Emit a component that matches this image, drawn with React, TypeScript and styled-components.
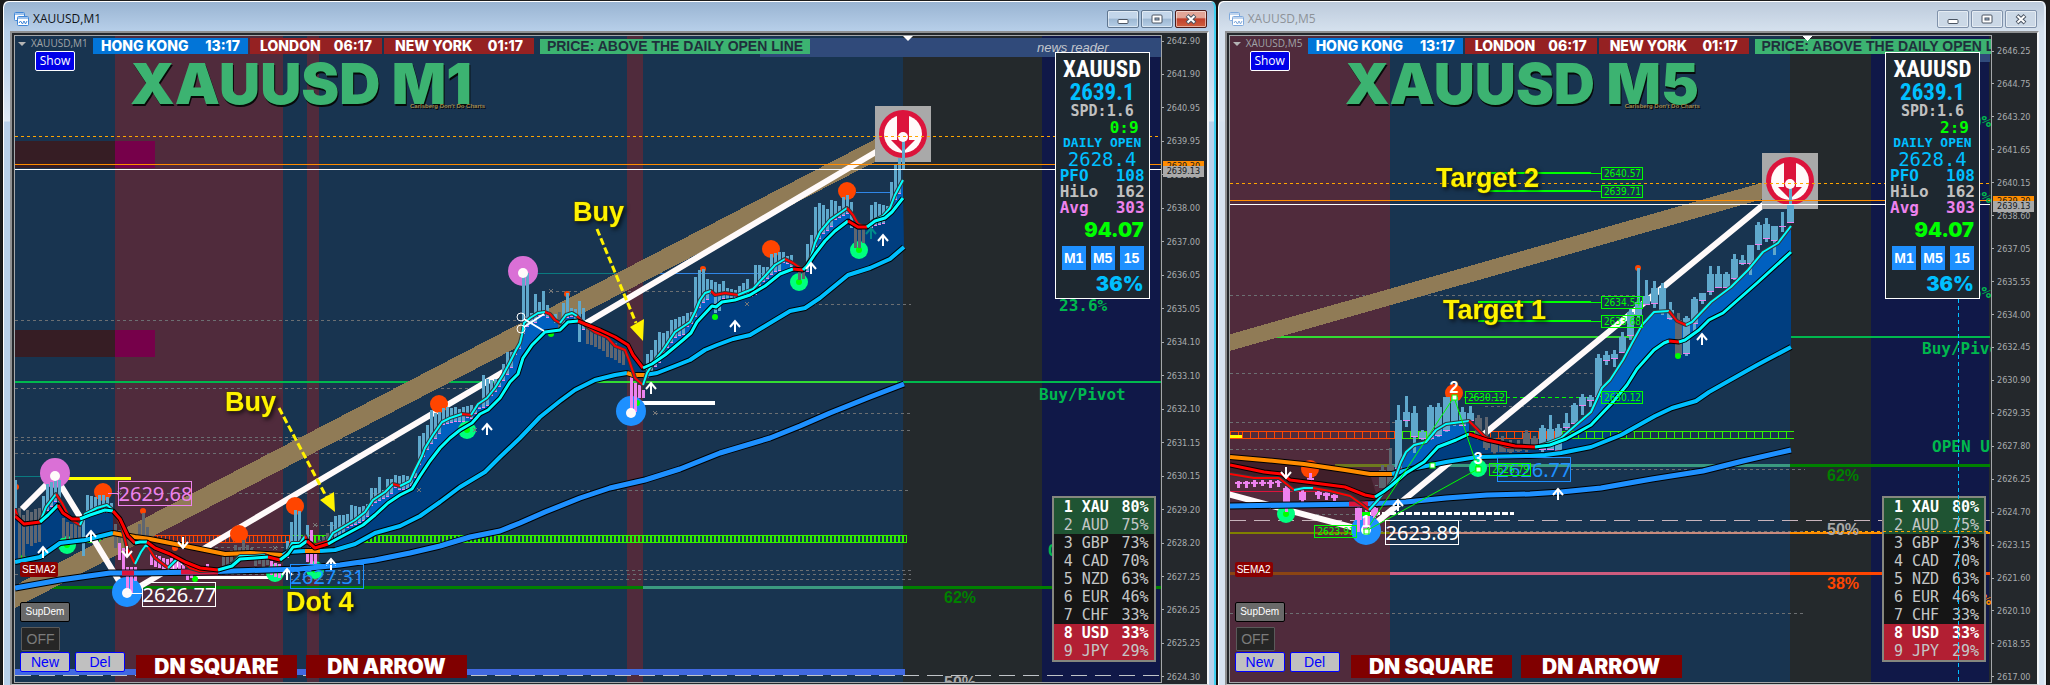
import React from "react";
import styled, { createGlobalStyle, css } from "styled-components";

const SANS = '"Liberation Sans", Arial, sans-serif';
const UI = '"Open Sans", "Noto Sans", sans-serif';
const BLACK = 'Inter, "Liberation Sans", sans-serif';
const MONO = '"DejaVu Sans Mono", "Liberation Mono", monospace';
const COND = 'Impact, "Liberation Sans Narrow", "Roboto Condensed", "DejaVu Sans Condensed", sans-serif';

const GlobalStyle = createGlobalStyle`
  *, *::before, *::after { box-sizing: border-box; }
  body { margin: 0; background: #1c1c1c; font-family: ${SANS}; }
  button { font: inherit; margin: 0; padding: 0; cursor: pointer; }
`;

/* ---------- window chrome ---------- */

const Desktop = styled.main`
  display: flex;
  min-height: 100vh;
  padding: 1px 3px 0 2px;
  overflow: hidden;
`;

const ChartWindow = styled.section<{ $grow: number; $active: boolean }>`
  flex: ${(p) => p.$grow} 1 0;
  min-width: 0;
  display: flex;
  flex-direction: column;
  border: solid #141414;
  border-width: 0 1px;
  border-radius: 6px 6px 0 0;
  box-shadow: inset 1px 1px 0 #fff, inset -2px 0 0 ${(p) => (p.$active ? "#3fd0f0" : "#e4edf6")};
  background: ${(p) =>
    p.$active
      ? "linear-gradient(#98b3d1 0, #b7cfe9 30px, #c3d8ee 70px, #e0eaf5 120px, #b9d1ea 121px)"
      : "linear-gradient(#bccadb 0, #d5e1ee 30px, #dbe6f2 120px, #d7e4f2 121px)"};
`;

const TitleBar = styled.header`
  display: flex;
  align-items: center;
  gap: 4px;
  height: 30px;
  padding: 6px 9px 0 11px;
`;

const WindowTitle = styled.h1<{ $active: boolean }>`
  flex: 1;
  margin: 0;
  font: 400 12px/16px ${UI};
  color: ${(p) => (p.$active ? "#101418" : "#8d9298")};
`;

const WindowButtons = styled.div`
  display: flex;
  gap: 2px;
`;

const WindowButton = styled.button<{ $kind: "active" | "idle" | "close" }>`
  display: flex;
  align-items: center;
  justify-content: center;
  width: 32px;
  height: 18px;
  border: 1px solid #5f7690;
  border-radius: 2px;
  box-shadow: inset 0 0 0 1px rgba(255, 255, 255, 0.5);
  background: linear-gradient(#c3d6ea 0 45%, #9db8d3 50%, #b6cee6);
  ${(p) => p.$kind === "idle" && css`border-color: #8092ab; background: #cbd8e6;`}
  ${(p) =>
    p.$kind === "close" &&
    css`
      border-color: #4c1a18;
      background: linear-gradient(#e2a597 0 40%, #c0402c 50%, #cf5f3f);
    `}
`;

const Frame = styled.div`
  flex: 1;
  display: flex;
  min-height: 0;
  margin: 0 7px 0 7px;
  padding: 2px 0 1px 2px;
  border: 2px solid #8e9092;
  border-right-color: #f4f6f8;
  border-bottom: 1px solid #c8c8c8;
  background: #24282c;
`;

const Plot = styled.div`
  position: relative;
  flex: 1;
  min-width: 0;
  border: 1px solid #a4a7aa;
  overflow: hidden;
  background: #24292c;
`;

const Canvas = styled.svg`
  position: absolute;
  inset: 0;
  width: 100%;
  height: 100%;
  pointer-events: none;
`;

/* ---------- price axis ---------- */

const Axis = styled.ol<{ $top: number }>`
  position: relative;
  display: flex;
  flex-direction: column;
  justify-content: space-between;
  width: 45px;
  margin: 0;
  padding: ${(p) => p.$top}px 0 0;
  list-style: none;
`;

const AxisLabel = styled.li`
  display: flex;
  align-items: center;
  gap: 3px;
  height: 12px;
  font: 400 9px/12px "DejaVu Sans Condensed", "DejaVu Sans", sans-serif;
  color: #a9acae;
  &::before {
    content: "";
    width: 2px;
    height: 1px;
    background: #a9acae;
  }
`;

const PriceTag = styled.li<{ $top: number; $bg: string }>`
  position: absolute;
  left: 1px;
  top: ${(p) => p.$top}px;
  width: 41px;
  height: 11px;
  padding-left: 4px;
  background: ${(p) => p.$bg};
  color: #14181c;
  font: 400 9px/11px "DejaVu Sans Condensed", "DejaVu Sans", sans-serif;
`;

/* ---------- controls over the chart ---------- */

const Overlay = styled.div`
  position: absolute;
  inset: 0;
  display: flex;
  flex-direction: column;
  align-items: flex-start;
`;

const HeaderRow = styled.div`
  display: flex;
  align-items: flex-start;
  gap: 2px;
  padding-top: 2px;
  white-space: nowrap;
`;

const SymbolLabel = styled.div`
  display: flex;
  align-items: center;
  gap: 5px;
  width: 76px;
  height: 11px;
  padding-left: 3px;
  font: 400 10px/11px ${UI};
  color: #a0a4a8;
  &::before {
    content: "";
    border: 4px solid transparent;
    border-top-color: #b4b4b4;
    border-bottom: 0;
  }
`;

const Session = styled.div<{ $width: number; $open?: boolean; $pad: number }>`
  display: flex;
  justify-content: space-between;
  width: ${(p) => p.$width}px;
  height: 16px;
  padding: 0 ${(p) => p.$pad}px;
  background: ${(p) => (p.$open ? "#0275d8" : "#952122")};
  color: #fff;
  font: 800 14px/16px ${BLACK};
`;

const PriceState = styled.div`
  width: 270px;
  height: 15px;
  margin: 1px 0 0 4px;
  background: #3cb371;
  color: #1f303c;
  font: 700 14px/15px ${SANS};
  text-align: center;
`;

const ShowButton = styled.button`
  width: 40px;
  height: 20px;
  margin-left: 20px;
  margin-top: -3px;
  border: 1px solid #fff;
  border-radius: 2px;
  background: #0000e8;
  color: #fff;
  font: 400 12px/16px ${UI};
  z-index: 1;
`;

const BigTitle = styled.h2`
  margin: -20px 0 0 115px;
  color: #3cb371;
  font: 900 57px/66px ${BLACK};
  text-shadow: 1px 2px 0 #060a08;
  white-space: nowrap;
`;

const Motto = styled.p`
  margin: -15px 0 0 395px;
  color: #a58a4e;
  font: 700 6px/8px ${SANS};
  text-shadow: 1px 1px 0 #000;
`;

const Footer = styled.div`
  display: flex;
  flex-direction: column;
  align-items: flex-start;
  margin-top: auto;
  padding: 0 0 5px 5px;
`;

const Chip = styled.span`
  height: 15px;
  margin-bottom: 25px;
  padding: 0 2px;
  border-radius: 2px;
  background: #8b0000;
  color: #fff;
  font: 400 10px/15px ${SANS};
`;

const SupDemButton = styled.button`
  width: 50px;
  height: 20px;
  border: 1px solid #000;
  border-radius: 2px;
  background: #696969;
  color: #fff;
  font: 400 10px/16px ${SANS};
`;

const OffButton = styled.button`
  width: 39px;
  height: 24px;
  margin: 5px 0 1px 1px;
  border: 1px solid #5a5a5a;
  border-radius: 1px;
  background: #262626;
  color: #7b7b7b;
  font: 400 14px/20px ${SANS};
`;

const FooterRow = styled.div`
  display: flex;
  align-items: flex-start;
  gap: 5px;
  height: 25px;
`;

const ObjectButton = styled.button`
  width: 50px;
  height: 20px;
  border: 1px solid #0000ff;
  border-radius: 2px;
  background: #c0c0c0;
  color: #0000ff;
  font: 400 14px/18px ${SANS};
`;

const SignalBadge = styled.div<{ $last?: boolean }>`
  width: 161px;
  height: 23px;
  margin: 3px 0 0 ${(p) => (p.$last ? 4 : 6)}px;
  background: #800000;
  color: #fff;
  font: 900 21px/23px ${BLACK};
  text-align: center;
  white-space: nowrap;
`;

/* ---------- quote panel ---------- */

const QuotePanel = styled.aside`
  position: absolute;
  top: 16px;
  right: 11px;
  width: 95px;
  height: 247px;
  padding: 5px 4px 0;
  border: 1px solid #fff;
  background: #1e2830;
`;

const Line = styled.div<{ $size: number; $h: number; $color: string; $align?: string; $font?: string; $weight?: number; $pad?: number }>`
  height: ${(p) => p.$h}px;
  padding: 0 ${(p) => p.$pad ?? 0}px;
  text-align: ${(p) => p.$align ?? "center"};
  color: ${(p) => p.$color};
  font: ${(p) => p.$weight ?? 400} ${(p) => p.$size}px/${(p) => p.$h}px ${(p) => p.$font ?? MONO};
  white-space: nowrap;
`;

const Pair = styled(Line)`
  display: flex;
  justify-content: space-between;
`;

const Frames = styled.div`
  display: flex;
  justify-content: space-between;
  padding: 2px 1px 3px 2px;
`;

const FrameButton = styled.button`
  width: 24px;
  height: 24px;
  border: 0;
  background: #1e90ff;
  color: #fff;
  font: 700 14px/24px ${SANS};
`;

/* ---------- strength table ---------- */

const Strength = styled.table`
  position: absolute;
  right: 5px;
  bottom: 20px;
  width: 104px;
  border: 2px solid #85877f;
  border-collapse: collapse;
  background: #151515;
  font: 400 15px/18px ${MONO};
`;

const StrengthRow = styled.tr<{ $tone: "up" | "flat" | "down"; $lead: boolean }>`
  height: 18px;
  background: ${(p) => ({ up: "#1f5433", flat: "#151515", down: "#b21f33" })[p.$tone]};
  color: ${(p) => (p.$lead ? "#fff" : "#c4c6c6")};
  font-weight: ${(p) => (p.$lead ? 700 : 400)};
  td {
    padding: 0;
  }
  td:first-child {
    width: 29px;
    padding-left: 10px;
  }
  td:last-child {
    padding-right: 5px;
    text-align: right;
  }
`;

/* ---------- chart drawing helpers ---------- */

type Pt = [number, number];
type Seg = { c: string; p: Pt[] };
type Bar = [number, number, number, string?];

const AQUA = "#00ffff";
const RED = "#ff0000";
const ORANGE = "#ff8c00";
const SKY = "#00bfff";
const BLUE = "#5fa8cc";
const GREY = "#5f6670";
const VIOLET = "#ee82ee";
const LIME = "#00ff00";

const toPoints = (p: Pt[]) => p.map((q) => q.join(",")).join(" ");

const joined = (s: Seg[]) => s.flatMap((x) => x.p);

const between = (top: Pt[], bottom: Pt[], from: number, to: number) => {
  const keep = (p: Pt[]) => p.filter(([x]) => x >= from && x <= to);
  return toPoints([...keep(top), ...keep(bottom).reverse()]);
};

const valueAt = (p: Pt[], x: number) => {
  const i = p.findIndex((q) => q[0] >= x);
  if (i <= 0) return p[i < 0 ? p.length - 1 : 0][1];
  const [a, b] = [p[i - 1], p[i]];
  return a[1] + ((b[1] - a[1]) * (x - a[0])) / (b[0] - a[0] || 1);
};

const Average = ({ segs, width, edge }: { segs: Seg[]; width: number; edge: string }) => (
  <g fill="none" strokeLinejoin="round">
    <polyline points={toPoints(joined(segs))} stroke={edge} strokeWidth={width + 2} />
    {segs.map((s, i) => {
      const prev = i > 0 ? segs[i - 1].p.slice(-1) : [];
      return <polyline key={i} points={toPoints([...prev, ...s.p])} stroke={s.c} strokeWidth={width} />;
    })}
  </g>
);

const H = ({ y, x1, x2, c, w = 1, dash }: { y: number; x1: number; x2: number; c: string; w?: number; dash?: string }) => (
  <line x1={x1} x2={x2} y1={y + (w % 2) / 2} y2={y + (w % 2) / 2} stroke={c} strokeWidth={w} strokeDasharray={dash} />
);

const Arrow = ({ x, y, down, c = "#fff" }: { x: number; y: number; down?: boolean; c?: string }) => (
  <path
    d={down ? `M${x} ${y}v10m-5 -5l5 6l5 -6` : `M${x} ${y + 12}v-11m-5 6l5 -6l5 6`}
    fill="none"
    stroke={c}
    strokeWidth="2"
  />
);

const Dot = ({ x, y, r, c, inner, ir = 3 }: { x: number; y: number; r: number; c: string; inner?: string; ir?: number }) => (
  <>
    <circle cx={x} cy={y} r={r} fill={c} />
    {inner && <circle cx={x} cy={y} r={ir} fill={inner} />}
  </>
);

const Boxed = ({ x, y, w, h, c, size, children }: { x: number; y: number; w: number; h: number; c: string; size: number; children: string }) => (
  <>
    <rect x={x + 0.5} y={y + 0.5} width={w} height={h} fill="none" stroke={c} />
    <text
      x={x + 1 + w / 2}
      y={y + h - (size > 15 ? 4 : 2)}
      fill={c}
      fontSize={size}
      fontFamily={size > 15 ? "Noto Sans, sans-serif" : "DejaVu Sans Condensed, sans-serif"}
      textAnchor="middle"
    >
      {children}
    </text>
  </>
);

const Note = ({ x, y, children }: { x: number; y: number; children: string }) => (
  <text
    x={x}
    y={y}
    fill="#fff200"
    stroke="#4a4600"
    strokeWidth="1"
    paintOrder="stroke"
    fontFamily={SANS}
    fontWeight="700"
    fontSize="27"
    style={{ filter: "drop-shadow(2px 2px 2px #000a)" }}
  >
    {children}
  </text>
);

const Level = ({ x, y, c, children, mono }: { x: number; y: number; c: string; children: string; mono?: boolean }) => (
  <text x={x} y={y} fill={c} fontFamily={mono ? MONO : SANS} fontWeight="700" fontSize="16">
    {children}
  </text>
);

const ExitSign = ({ x, y }: { x: number; y: number }) => (
  <g>
    <rect x={x - 28} y={y - 28} width="56" height="56" fill="#a9a9a9" />
    <circle cx={x} cy={y} r="24" fill="#dc143c" />
    <circle cx={x} cy={y} r="19" fill="#fffafa" />
    <path d={`M${x - 6} ${y - 21}h12v27h6l-12 12l-12 -12h6z`} fill="#dc143c" />
  </g>
);

const Ladder = ({ x1, x2, y, step, c, w }: { x1: number; x2: number; y: number; step: number; c: string; w: number }) => (
  <g>
    <line x1={x1} x2={x2} y1={y + 4} y2={y + 4} stroke={c} strokeWidth="7" strokeDasharray={`${w} ${step - w}`} />
    <H x1={x1} x2={x2} y={y} c={c} />
    <H x1={x1} x2={x2} y={y + 7} c={c} />
  </g>
);

/* ---------- M1 data ---------- */

const fast1: Seg[] = [
  { c: RED, p: [[15, 509], [18, 518], [24, 525], [40, 522]] },
  { c: AQUA, p: [[46, 507], [56, 494]] },
  { c: RED, p: [[62, 503], [70, 519], [80, 525]] },
  { c: AQUA, p: [[85, 514], [97, 508], [107, 505], [113, 510]] },
  { c: RED, p: [[122, 527], [127, 548], [135, 564]] },
  { c: AQUA, p: [[141, 552], [146, 545], [148, 547]] },
  { c: RED, p: [[155, 558], [168, 568]] },
  { c: AQUA, p: [[178, 558]] },
  { c: RED, p: [[190, 568], [200, 571], [220, 570]] },
  { c: AQUA, p: [[232, 564], [240, 556], [255, 556], [265, 555]] },
  { c: RED, p: [[280, 562]] },
  { c: AQUA, p: [[288, 552], [292, 543], [300, 543], [305, 536]] },
  { c: RED, p: [[308, 542], [315, 545], [328, 541]] },
  { c: AQUA, p: [[333, 533], [340, 529], [355, 520], [365, 512], [373, 500], [385, 492], [393, 484]] },
  { c: RED, p: [[400, 486]] },
  { c: AQUA, p: [[410, 481], [415, 470], [422, 456], [425, 448], [433, 435], [442, 422], [450, 418], [462, 414]] },
  { c: RED, p: [[471, 415]] },
  { c: AQUA, p: [[478, 404], [487, 398], [495, 388], [503, 375], [510, 362], [516, 350], [520, 343], [522, 335], [524, 323], [530, 318], [538, 313], [545, 312]] },
  { c: RED, p: [[550, 314], [555, 320], [560, 323]] },
  { c: AQUA, p: [[566, 315], [572, 313], [577, 316]] },
  { c: RED, p: [[585, 325], [595, 332], [607, 337], [615, 346], [625, 350], [629, 360], [635, 378], [643, 385]] },
  { c: AQUA, p: [[647, 373], [655, 360], [663, 350], [675, 332], [690, 322], [695, 312], [700, 300], [705, 293], [711, 291]] },
  { c: RED, p: [[715, 295], [725, 293], [738, 295]] },
  { c: AQUA, p: [[745, 292], [753, 289], [765, 276], [775, 265], [785, 259]] },
  { c: RED, p: [[793, 263], [803, 270]] },
  { c: AQUA, p: [[810, 260], [815, 243], [820, 232], [830, 220], [840, 213], [847, 208]] },
  { c: RED, p: [[853, 215], [858, 224], [865, 227]] },
  { c: AQUA, p: [[873, 221], [883, 216], [890, 208], [895, 195], [903, 180]] },
];

const mid1: Seg[] = [
  { c: RED, p: [[15, 516], [24, 524], [40, 522]] },
  { c: AQUA, p: [[48, 515], [58, 505]] },
  { c: RED, p: [[63, 513], [72, 519], [80, 519]] },
  { c: AQUA, p: [[90, 515], [105, 510], [113, 511]] },
  { c: RED, p: [[120, 519], [128, 536], [135, 543]] },
  { c: AQUA, p: [[140, 542], [147, 542]] },
  { c: RED, p: [[155, 548], [170, 554], [185, 562], [200, 568], [218, 570]] },
  { c: AQUA, p: [[232, 566], [240, 559], [255, 558], [268, 557]] },
  { c: RED, p: [[280, 560]] },
  { c: AQUA, p: [[288, 554], [293, 547], [300, 546], [307, 541]] },
  { c: RED, p: [[315, 548], [328, 544]] },
  { c: AQUA, p: [[335, 540], [350, 532], [363, 525], [375, 515], [388, 503], [400, 495], [412, 489], [420, 476], [430, 461], [440, 448], [450, 438], [460, 430], [472, 423], [480, 414], [488, 410], [500, 398], [510, 382], [518, 374], [523, 358], [532, 345], [545, 332], [560, 330], [568, 322], [578, 321]] },
  { c: RED, p: [[585, 324], [600, 330], [615, 337], [628, 345], [633, 355], [643, 368]] },
  { c: AQUA, p: [[652, 364], [665, 355], [683, 340], [691, 333], [697, 322], [712, 306], [716, 307], [722, 302], [735, 300], [750, 295], [765, 286], [780, 274], [793, 269]] },
  { c: RED, p: [[803, 270]] },
  { c: AQUA, p: [[807, 266], [815, 254], [825, 241], [835, 231], [848, 221]] },
  { c: RED, p: [[858, 227], [867, 227]] },
  { c: AQUA, p: [[875, 221], [885, 218], [892, 212], [903, 198]] },
];

const slow1: Seg[] = [
  { c: SKY, p: [[15, 562], [40, 557], [60, 543], [85, 540], [113, 533]] },
  { c: ORANGE, p: [[135, 537], [150, 539], [180, 545], [200, 549], [225, 554], [250, 553], [283, 555]] },
  { c: SKY, p: [[288, 552], [305, 551]] },
  { c: ORANGE, p: [[320, 551]] },
  { c: SKY, p: [[335, 550], [355, 544], [375, 533], [400, 526], [420, 516], [440, 502], [460, 487], [485, 472], [500, 457], [520, 438], [540, 417], [560, 401], [575, 390], [595, 380], [615, 375], [627, 373]] },
  { c: ORANGE, p: [[633, 375], [645, 375]] },
  { c: SKY, p: [[657, 373], [675, 366], [690, 360], [705, 350], [717, 345], [733, 339], [750, 335], [775, 320], [790, 311], [805, 308], [820, 298], [848, 275], [870, 268], [890, 259], [904, 247]] },
];

const base1: Pt[] = [[15, 588], [60, 580], [110, 573], [140, 573], [200, 572], [300, 569], [340, 565], [375, 560], [410, 553], [440, 546], [470, 537], [500, 531], [520, 523], [545, 512], [580, 498], [610, 488], [645, 480], [680, 469], [720, 453], [770, 438], [800, 426], [830, 413], [870, 397], [904, 384]];

const run = (x: number, tops: number[], c = BLUE, len = 0): Bar[] => tops.map((t, i) => [x + i * 4, t, len ? t + len : 0, c]);

const bars1: Bar[] = [
  [15, 480, 508], [19, 508, 560, GREY], [23, 515, 558, GREY], ...run(27, [510, 512, 509, 508], GREY, 34),
  ...run(43, [496, 484, 482, 480, 480]), ...run(63, [518, 522, 524, 524, 520], GREY, 20), [83, 520, 556],
  ...run(87, [495, 496, 497, 495, 495, 497, 503]), ...run(115, [524, 530], GREY, 24),
  [119, 543, 560, VIOLET], [123, 548, 575, VIOLET], [127, 567, 590, VIOLET], [131, 567, 593, VIOLET], [135, 567, 581, VIOLET],
  [139, 524, 541, GREY], [143, 513, 540, GREY], [147, 527, 545, GREY],
  ...run(151, [553, 555, 556, 558, 559, 558, 560, 562], VIOLET, 12), [183, 561, 571, VIOLET], [187, 569, 580, VIOLET], [191, 567, 578, VIOLET],
  [207, 564, 572, VIOLET], ...run(223, [555, 556, 550, 545, 547, 540, 545, 548, 554, 552, 557, 553], GREY, 12),
  ...run(271, [561, 563, 564], VIOLET, 14), ...run(287, [541, 522, 510, 511, 538, 525]),
  [307, 548, 562, VIOLET], [311, 530, 564, VIOLET], [315, 545, 564, VIOLET], ...run(319, [540, 537, 533], GREY, 12),
  ...run(331, [522, 516, 515, 515, 514, 505, 506, 507, 506, 504, 488, 488, 477, 490, 479, 479, 475, 476, 475, 476, 478, 473, 436, 433, 425, 410, 413, 412, 408, 407, 408, 407, 409, 407, 406, 405, 410, 407, 375, 379, 380, 379, 379, 364, 352, 352, 350, 345, 273, 273, 313, 294, 302, 291, 305]),
  [555, 314, 323], [559, 312, 330, GREY], ...run(563, [303, 293, 308, 309, 301, 308]),
  [579, 322, 342], ...run(587, [327, 328, 330, 332], GREY, 17), ...run(603, [334, 340, 341, 343, 346, 348], GREY, 17),
  [631, 377, 411, VIOLET], [635, 383, 412, VIOLET], [639, 385, 398, VIOLET], [643, 390, 398, VIOLET],
  ...run(647, [354, 350, 340, 332, 333, 331, 320, 319, 317, 316, 313, 312, 277, 270, 269, 279, 280]),
  [715, 282, 313], [719, 284, 311], ...run(723, [281, 288, 289, 290, 286, 283, 279, 292, 265, 265, 267, 267, 254, 253, 252, 252, 256, 255]),
  [799, 268, 280, GREY], [803, 270, 279, GREY], ...run(807, [244, 235, 207, 203, 205, 209, 200, 201, 206, 197, 195]),
  [851, 202, 228], [855, 226, 248, GREY], [859, 230, 248, GREY], [863, 229, 243, GREY],
  ...run(871, [205, 202, 204, 205, 206, 182, 165, 158]), [903, 139, 170],
];

const dashes1: Pt[][] = [
  [[15, 320], [522, 320]], [[15, 388], [478, 388]], [[15, 437], [395, 437]], [[15, 440], [395, 440]], [[15, 453], [395, 453]],
  [[550, 291], [694, 291]], [[747, 304], [911, 304]], [[655, 413], [911, 413]], [[475, 430], [911, 430]], [[419, 490], [911, 490]],
  [[119, 493], [400, 493]], [[315, 525], [380, 525]], [[185, 547], [285, 547]], [[15, 574], [911, 574]], [[290, 570], [911, 570]], [[290, 579], [911, 579]],
];

const crosses1: Pt[] = [[551, 291], [747, 304], [655, 413], [475, 430], [419, 490], [315, 525], [275, 548], [119, 493]];

const Cross = ({ x, y }: { x: number; y: number }) => (
  <path d={`M${x - 2} ${y - 2}l4 4m0 -4l-4 4`} stroke="#777" strokeWidth="1" />
);

const ChartM1 = () => {
  const a = joined(fast1);
  const b = joined(mid1);
  const c = joined(slow1);
  return (
    <Canvas aria-label="XAUUSD one minute chart" role="img">
      <g transform="translate(-15 -36)">
        <rect x="15" y="36" width="888" height="2000" fill="#183450" />
        <rect x="115" y="36" width="168" height="2000" fill="#502b3c" />
        <rect x="307" y="36" width="12" height="2000" fill="#502b3c" />
        <rect x="627" y="36" width="16" height="2000" fill="#502b3c" />
        <rect x="1042" y="36" width="118" height="2000" fill="#101848" />
        <rect x="760" y="38" width="401" height="19" fill="#304a7a" />
        {[141, 330].map((y) => (
          <g key={y}>
            <rect x="15" y={y} width="100" height="27" fill="#361d24" />
            <rect x="115" y={y} width="40" height="27" fill="#76004a" />
          </g>
        ))}
        <g shapeRendering="crispEdges">
          {dashes1.map(([p, q], i) => (
            <H key={i} x1={p[0]} x2={q[0]} y={p[1]} c="#6c6f72" dash="3 3" />
          ))}
          <H x1={15} x2={1161} y={382} w={2} c="#00b84e" />
          <H x1={595} x2={897} y={382} w={2} c="#32dc32" />
          <H x1={15} x2={1161} y={587} w={3} c="#008000" />
          <H x1={643} x2={903} y={587} w={3} c="#3a9a80" />
          <H x1={15} x2={57} y={476} c="#0a7a80" />
          <H x1={536} x2={660} y={273} c="#0a7a80" />
          <H x1={656} x2={762} y={273} c="#2f86e8" />
          <H x1={856} x2={891} y={192} c="#2f86e8" />
          <Ladder x1={15} x2={133} y={535} step={4} c="#32dc20" w={2} />
          <Ladder x1={133} x2={290} y={535} step={4} c="#ff4500" w={1} />
          <Ladder x1={290} x2={907} y={535} step={4} c="#32f000" w={2} />
          <H x1={15} x2={905} y={672} w={6} c="#4169e1" />
          <H x1={15} x2={1161} y={675} c="#c0c4c8" dash="16 8" />
        </g>
        <line x1="-5" y1="607" x2="903" y2="136" stroke="#907b56" strokeWidth="20" shapeRendering="crispEdges" />
        <polyline points="22,509 55,476 127,594 903,136" fill="none" stroke="#fffafa" strokeWidth="6" />
        <H x1={55} x2={131} y={478} w={3} c="#ffff00" />
        <H x1={196} x2={281} y={577} w={3} c="#fff" />
        <H x1={637} x2={715} y={403} w={4} c="#fff" />

        <polygon points={between(b, c, 15, 113)} fill="#003e80" />
        <polygon points={between(b, c, 113, 288)} fill="#401f2a" />
        <polygon points={between(a, c, 113, 288)} fill="#5a2530" fillOpacity="0.4" />
        <polygon points={between(b, c, 330, 645)} fill="#003e80" />
        <polygon points={between(b, c, 651, 904)} fill="#003e80" />
        <polygon points={between(a, b, 46, 60)} fill="#0060c0" />
        <polygon points={between(a, b, 330, 578)} fill="#0060c0" />
        <polygon points={between(a, b, 652, 904)} fill="#0060c0" />

        <Dot x={55} y={473} r={15} c="#da70d6" />
        <Dot x={523} y={271} r={15} c="#da70d6" />
        <Dot x={127} y={592} r={15} c="#1e90ff" />
        <Dot x={631} y={411} r={15} c="#1e90ff" />
        {[[103, 492], [239, 534], [295, 506], [439, 404], [847, 191], [771, 249]].map(([x, y]) => (
          <Dot key={x} x={x} y={y} r={9} c="#ff4500" />
        ))}
        {[[143, 511], [703, 269], [567, 294], [16, 487], [175, 548]].map(([x, y]) => (
          <Dot key={x} x={x} y={y} r={3} c="#ff4500" />
        ))}
        {[[67, 545], [275, 573], [315, 570], [467, 430], [799, 282], [859, 250]].map(([x, y]) => (
          <Dot key={x} x={x} y={y} r={9} c="#00ff7f" inner={LIME} />
        ))}
        {[[715, 317], [551, 334], [23, 558], [195, 579], [637, 403]].map(([x, y]) => (
          <Dot key={x} x={x} y={y} r={3} c={LIME} />
        ))}

        <ExitSign x={903} y={134} />
        <g shapeRendering="crispEdges">
          {bars1.map(([x, t, bt, col = BLUE], i) => {
            const end = bt || valueAt(a, x) + 2 + ((i * 7) % 6);
            return (
              <g key={i}>
                <rect x={x - 1} y={t} width="3" height={Math.max(2, end - t)} fill={col} />
                {col === BLUE && !bt && <rect x={x - 1} y={end} width="3" height="1" fill={VIOLET} />}
              </g>
            );
          })}
        </g>

        <Average segs={[{ c: "#1e90ff", p: base1 }]} width={5} edge="#000" />
        <path d="M122 573h12M181 572h37" stroke="#dc143c" strokeWidth="5" />
        <Average segs={slow1} width={4} edge="#000" />
        <Average segs={fast1} width={2} edge="#33383c" />
        <Average segs={mid1} width={3} edge="#000" />

        {[[55, 476], [523, 273], [127, 593], [631, 413], [903, 137]].map(([x, y]) => (
          <Dot key={x} x={x} y={y} r={5} c="#fffafa" />
        ))}
        {crosses1.map(([x, y]) => (
          <Cross key={x} x={x} y={y} />
        ))}

        <g shapeRendering="crispEdges">
          <H x1={15} x2={1161} y={136} c="#ffa500" dash="3 3" />
          <H x1={15} x2={1161} y={164} c="#ff8c00" />
          <H x1={15} x2={1161} y={169} c="#fff" />
          <H x1={108} x2={119} y={493} c={VIOLET} />
          <H x1={127} x2={142} y={593} c="#fff" />
        </g>
        <Arrow x={871} y={227} c="#008b8b" />
        {[[43, 546], [91, 530], [287, 568], [331, 558], [487, 423], [735, 320], [811, 262], [883, 234], [651, 382]].map(([x, y]) => (
          <Arrow key={x} x={x} y={y} />
        ))}
        <Arrow x={127} y={546} down />
        <Arrow x={183} y={537} down />
        <g fill="none" stroke="#fff" strokeWidth="1">
          <circle cx="521" cy="317" r="4" />
          <circle cx="521" cy="329" r="4" />
          <path d="M524 319l20 12M524 327l20 -13" strokeWidth="2" />
        </g>
        <Boxed x={118} y={481} w={73} h={24} c={VIOLET} size={20}>2629.68</Boxed>
        <Boxed x={142} y={582} w={73} h={24} c="#fff" size={20}>2626.77</Boxed>
        <Boxed x={290} y={564} w={73} h={24} c="#1e90ff" size={20}>2627.31</Boxed>

        <Note x={573} y={221}>Buy</Note>
        <Note x={225} y={411}>Buy</Note>
        <Note x={286} y={611}>Dot 4</Note>
        <g stroke="#fff200" strokeWidth="3" strokeDasharray="7 3">
          <path d="M597 229L636 323M279 408L327 498" />
        </g>
        <path d="M630 327L644 319L643 341ZM320 500L334 492L335 512Z" fill="#fff200" />

        <Level x={944} y={603} c="#008000">62%</Level>
        <Level x={944} y={688} c="#a8a8a8">50%</Level>
        <Level x={1059} y={311} c="#00b84e" mono>23.6%</Level>
        <Level x={1039} y={400} c="#00b84e" mono>Buy/Pivot</Level>
        <Level x={1048} y={556} c="#00b84e" mono>OPEN UP</Level>
        <text x="1037" y="52" fill="#c2c6cc" fontFamily={SANS} fontStyle="italic" fontSize="13">news reader</text>
        <path d="M903 36h10l-5 5z" fill="#fff" />
      </g>
    </Canvas>
  );
};

/* ---------- M5 data ---------- */

const fast5: Seg[] = [
  { c: RED, p: [[1230, 474], [1254, 478], [1279, 478], [1294, 490]] },
  { c: AQUA, p: [[1304, 488], [1313, 488]] },
  { c: RED, p: [[1330, 491], [1350, 496], [1360, 503], [1369, 510]] },
  { c: AQUA, p: [[1378, 500], [1395, 478], [1401, 462], [1406, 452], [1414, 445], [1426, 442], [1436, 430], [1446, 424], [1469, 421]] },
  { c: RED, p: [[1475, 427], [1485, 437], [1507, 447], [1534, 448]] },
  { c: AQUA, p: [[1548, 443], [1561, 438], [1576, 425], [1591, 412], [1602, 388], [1610, 380], [1623, 360], [1632, 343], [1642, 325], [1654, 312], [1669, 311]] },
  { c: RED, p: [[1677, 321], [1686, 325]] },
  { c: AQUA, p: [[1692, 322], [1711, 302], [1731, 287], [1748, 270], [1763, 252], [1778, 243], [1791, 226]] },
];

const mid5: Seg[] = [
  { c: RED, p: [[1230, 465], [1264, 472], [1282, 474], [1290, 480], [1314, 483], [1345, 487], [1365, 495], [1375, 497]] },
  { c: AQUA, p: [[1383, 492], [1391, 486], [1406, 473], [1424, 462], [1438, 447], [1456, 440], [1469, 434]] },
  { c: RED, p: [[1487, 440], [1515, 446], [1535, 447]] },
  { c: AQUA, p: [[1550, 445], [1566, 439], [1591, 425], [1612, 403], [1627, 385], [1637, 369], [1654, 350], [1664, 343], [1669, 341]] },
  { c: RED, p: [[1679, 342]] },
  { c: AQUA, p: [[1685, 340], [1699, 330], [1709, 320], [1723, 313], [1757, 283], [1791, 252]] },
];

const slow5: Seg[] = [
  { c: ORANGE, p: [[1230, 457], [1264, 460], [1304, 464], [1345, 470], [1370, 474], [1392, 474]] },
  { c: SKY, p: [[1396, 473], [1416, 468], [1446, 462], [1477, 457], [1530, 456], [1545, 455], [1561, 453], [1591, 447], [1621, 435], [1655, 416], [1672, 408], [1696, 401], [1709, 392], [1757, 365], [1791, 347]] },
];

const base5: Pt[] = [[1230, 506], [1294, 505], [1365, 504], [1406, 502], [1446, 498], [1487, 495], [1530, 494], [1561, 492], [1601, 488], [1652, 479], [1703, 471], [1743, 461], [1791, 450]];

/* high, body top, body bottom, low; newest candle first, eight pixels apart */
const candles5: [number, number, number, number][] = [
  [188, 204, 222, 222], [212, 226, 226, 232], [226, 226, 240, 255], [218, 224, 238, 242], [222, 225, 244, 250], [245, 245, 263, 275],
  [255, 260, 263, 265], [254, 259, 278, 280], [272, 274, 287, 288], [266, 274, 287, 287], [266, 274, 291, 295], [293, 293, 300, 304],
  [297, 299, 323, 333], [316, 318, 353, 356], [313, 320, 355, 358], [302, 310, 318, 320], [283, 288, 312, 315], [281, 288, 303, 308],
  [280, 296, 304, 304], [268, 302, 315, 318], [308, 312, 335, 340], [332, 337, 352, 352], [350, 354, 358, 367], [351, 355, 360, 365],
  [354, 358, 396, 396], [395, 397, 400, 407], [394, 397, 405, 415], [403, 405, 423, 423], [413, 423, 427, 430], [424, 428, 450, 450],
  [415, 429, 449, 449], [425, 428, 449, 452], [436, 438, 447, 449], [430, 433, 445, 447],
];

const early5: [number, number, number, number, number, string][] = [
  [1382, 465, 470, 488, 488, GREY], [1390, 448, 465, 485, 485, GREY], [1398, 405, 420, 468, 468, BLUE], [1406, 396, 412, 420, 427, BLUE],
  [1414, 406, 413, 436, 453, BLUE], [1422, 430, 432, 438, 440, BLUE], [1430, 405, 407, 438, 440, BLUE], [1438, 403, 407, 435, 437, BLUE],
  [1446, 397, 397, 430, 432, BLUE], [1454, 395, 397, 422, 426, BLUE], [1462, 407, 412, 425, 425, BLUE], [1470, 406, 413, 420, 422, BLUE],
  [1478, 415, 418, 438, 440, GREY], [1486, 417, 437, 448, 450, GREY], [1494, 438, 441, 452, 454, GREY], [1502, 436, 444, 452, 452, GREY],
  [1510, 440, 446, 452, 453, GREY], [1518, 440, 446, 451, 452, GREY], [1526, 433, 446, 450, 452, GREY],
  [1238, 481, 482, 484, 488, VIOLET], [1246, 481, 482, 484, 488, VIOLET], [1254, 480, 482, 484, 487, VIOLET], [1262, 480, 482, 484, 486, VIOLET],
  [1270, 480, 482, 484, 488, VIOLET], [1278, 480, 481, 483, 487, VIOLET], [1286, 486, 488, 502, 512, VIOLET], [1302, 490, 492, 500, 502, VIOLET],
  [1310, 473, 478, 480, 482, VIOLET], [1318, 491, 492, 495, 499, VIOLET], [1326, 492, 493, 496, 500, VIOLET], [1334, 494, 495, 498, 502, VIOLET],
  [1358, 504, 508, 520, 532, VIOLET], [1366, 510, 512, 530, 530, VIOLET], [1374, 504, 508, 516, 518, VIOLET],
];

const Candle = ({ x, v, c }: { x: number; v: number[]; c: string }) => (
  <g>
    <rect x={x - 1} y={v[0]} width="3" height={v[3] - v[0]} fill={c} />
    <rect x={x - 3} y={v[1]} width="7" height={Math.max(1, v[2] - v[1])} fill={c} />
    {c === BLUE && <rect x={x - 3} y={v[2]} width="7" height="1" fill={VIOLET} />}
  </g>
);

const dashes5: Pt[][] = [
  [[1230, 295], [1638, 295]], [[1230, 373], [1598, 373]], [[1230, 422], [1400, 422]], [[1230, 449], [1390, 449]], [[1485, 406], [1575, 406]],
  [[1357, 485], [1386, 485]], [[1310, 514], [1358, 514]], [[1230, 613], [1803, 613]], [[1570, 469], [1805, 469]], [[1380, 531], [1805, 531]],
];

const ChartM5 = () => {
  const a = joined(fast5);
  const b = joined(mid5);
  const c = joined(slow5);
  return (
    <Canvas aria-label="XAUUSD five minute chart" role="img">
      <g transform="translate(-1230 -36)">
        <rect x="1230" y="36" width="160" height="2000" fill="#502b3c" />
        <rect x="1390" y="36" width="400" height="2000" fill="#183450" />
        <rect x="1871" y="36" width="118" height="2000" fill="#101848" />
        <rect x="1979" y="54" width="11" height="8" fill="#304a7a" />
        <g shapeRendering="crispEdges">
          {dashes5.map(([p, q], i) => (
            <H key={i} x1={p[0]} x2={q[0]} y={p[1]} c="#6c6f72" dash="3 3" />
          ))}
          <H x1={1277} x2={1794} y={337} w={2} c="#32dc32" />
          <H x1={1790} x2={1990} y={337} w={2} c="#00b84e" />
          <H x1={1335} x2={1390} y={465} w={3} c="#6e7a1e" />
          <H x1={1390} x2={1790} y={465} w={3} c="#3a9a80" />
          <H x1={1790} x2={1990} y={465} w={3} c="#008000" />
          <H x1={1230} x2={1390} y={533} w={2} c="#808000" />
          <H x1={1390} x2={1790} y={533} w={2} c="#c88a7c" />
          <H x1={1790} x2={1990} y={533} w={2} c="#ff8c00" />
          <H x1={1230} x2={1390} y={573} w={3} c="#8b4513" />
          <H x1={1390} x2={1790} y={573} w={3} c="#cd5c7e" />
          <H x1={1790} x2={1990} y={573} w={3} c="#ff4500" />
          <H x1={1230} x2={1990} y={520} c="#c8b4bc" dash="16 8" />
          <H x1={1230} x2={1345} y={491} c="#dc143c" />
          <Ladder x1={1242} x2={1402} y={431} step={8} c="#ff4500" w={1} />
          <Ladder x1={1402} x2={1482} y={431} step={8} c="#32f000" w={1} />
          <Ladder x1={1482} x2={1562} y={431} step={8} c="#ff4500" w={1} />
          <Ladder x1={1230} x2={1242} y={431} step={8} c="#ff4500" w={1} />
          <H x1={1230} x2={1242} y={436} w={3} c="#ffff00" />
          {[173, 191, 302, 321].map((y) => (
            <g key={y}>
              <H x1={1478} x2={1591} y={y} w={2} c={LIME} />
              <H x1={1591} x2={1601} y={y} c={LIME} />
            </g>
          ))}
          <H x1={1457} x2={1601} y={397} c={LIME} dash="4 3" />
        </g>
        <line x1="1190" y1="354" x2="1790" y2="183" stroke="#907b56" strokeWidth="16" shapeRendering="crispEdges" />
        <polyline points="1220,492 1366,531 1790,183" fill="none" stroke="#fffafa" strokeWidth="6" />
        <H x1={1366} x2={1514} y={513} w={3} c="#fff" dash="6 2" />

        <polygon points={between(c, a, 1230, 1388)} fill="#401f2a" />
        <polygon points={between(b, c, 1391, 1791)} fill="#003e80" />
        <polygon points={between(a, b, 1391, 1470)} fill="#0060c0" />
        <polygon points={between(a, b, 1540, 1791)} fill="#0060c0" />
        <g shapeRendering="crispEdges">
          <Ladder x1={1562} x2={1794} y={431} step={8} c="#32f000" w={1} />
        </g>

        <Dot x={1310} y={469} r={9} c="#ff4500" />
        <Dot x={1454} y={393} r={9} c="#ff4500" />
        <Dot x={1638} y={268} r={3} c="#ff4500" />
        <Dot x={1286} y={514} r={9} c="#00ff7f" inner={LIME} />
        <Dot x={1366} y={530} r={15} c="#1e90ff" inner="#fff" ir={5} />

        <ExitSign x={1790} y={181} />
        <g shapeRendering="crispEdges">
          {candles5.map((v, i) => (
            <Candle key={i} x={1790 - i * 8} v={v} c={i === 14 || i > 31 ? GREY : BLUE} />
          ))}
          {early5.map(([x, ...rest], i) => (
            <Candle key={i} x={x} v={rest.slice(0, 4) as number[]} c={rest[4] as string} />
          ))}
        </g>
        <Dot x={1790} y={184} r={5} c="#fffafa" />
        <Dot x={1678} y={356} r={3} c={LIME} />

        <Average segs={[{ c: "#1e90ff", p: base5 }]} width={5} edge="#000" />
        <path d="M1349 504h19" stroke="#dc143c" strokeWidth="5" />
        <Average segs={slow5} width={4} edge="#000" />
        <Average segs={fast5} width={2} edge="#33383c" />
        <Average segs={mid5} width={3} edge="#000" />
        <Dot x={1478} y={468} r={9} c="#00ff7f" inner={LIME} />
        <rect x="1362" y="512" width="8" height="4" fill={LIME} />

        <Boxed x={1497} y={457} w={73} h={24} c="#1e90ff" size={20}>2626.77</Boxed>
        <g fill="none" stroke={LIME} strokeWidth="1">
          <path d="M1366 531L1454 397L1478 469Z" />
        </g>
        {[[1366, 531], [1454, 397], [1478, 469], [1432, 465]].map(([x, y]) => (
          <rect key={x} x={x - 2} y={y - 2} width="5" height="5" fill="#fff" stroke={LIME} />
        ))}
        <g shapeRendering="crispEdges">
          <H x1={1230} x2={1990} y={183} c="#ffa500" dash="3 3" />
          <H x1={1230} x2={1990} y={200} c="#ff8c00" />
          <H x1={1230} x2={1990} y={204} c="#fff" />
        </g>
        {[[1398, 499], [1558, 488], [1702, 333]].map(([x, y]) => (
          <Arrow key={x} x={x} y={y} />
        ))}
        <Arrow x={1286} y={467} down />

        <g fill="#fff" fontFamily={SANS} fontWeight="700" fontSize="16" textAnchor="middle">
          <text x="1366" y="527">1</text>
          <text x="1454" y="393">2</text>
          <text x="1478" y="464">3</text>
        </g>
        <Boxed x={1465} y={391} w={41} h={12} c={LIME} size={10}>2630.12</Boxed>
        <Boxed x={1489} y={463} w={41} h={12} c={LIME} size={10}>2626.79</Boxed>
        <Boxed x={1314} y={525} w={42} h={12} c={LIME} size={10}>2623.91</Boxed>
        <Boxed x={1601} y={167} w={41} h={12} c={LIME} size={10}>2640.57</Boxed>
        <Boxed x={1601} y={185} w={41} h={12} c={LIME} size={10}>2639.71</Boxed>
        <Boxed x={1601} y={296} w={41} h={12} c={LIME} size={10}>2634.54</Boxed>
        <Boxed x={1601} y={315} w={41} h={12} c={LIME} size={10}>2633.68</Boxed>
        <Boxed x={1601} y={391} w={41} h={12} c={LIME} size={10}>2630.12</Boxed>
        <Boxed x={1385} y={520} w={73} h={24} c="#fff" size={20}>2623.89</Boxed>

        <Note x={1436} y={187}>Target 2</Note>
        <Note x={1443} y={319}>Target 1</Note>

        <Level x={1827} y={481} c="#008000">62%</Level>
        <Level x={1827} y={535} c="#a8a8a8">50%</Level>
        <Level x={1827} y={589} c="#ff4500">38%</Level>
        <Level x={1943} y={127} c="#00b84e" mono>50.0%</Level>
        <Level x={1943} y={203} c="#00b84e" mono>38.2%</Level>
        <Level x={1943} y={298} c="#00b84e" mono>23.6%</Level>
        <Level x={1922} y={354} c="#00b84e" mono>Buy/Pivot</Level>
        <Level x={1932} y={452} c="#00b84e" mono>OPEN UP</Level>
        <Level x={1943} y={605} c="#ff8c00" mono>61.8%</Level>
      </g>
    </Canvas>
  );
};

const GuidesM5 = () => (
  <Canvas aria-hidden="true">
    <g transform="translate(-1230 -36)" shapeRendering="crispEdges">
      <line x1="1958.5" x2="1958.5" y1="299" y2="2000" stroke={SKY} strokeDasharray="4 3" />
      <H x1={1805} x2={1990} y={531} c="#ffa500" dash="3 3" />
      <path d="M1802 36h10l-5 5z" fill="#fff" />
    </g>
  </Canvas>
);

/* ---------- composed parts ---------- */

const ChartIcon = ({ dim }: { dim?: boolean }) => (
  <svg width="15" height="15" viewBox="0 0 15 15" fill="#fff" stroke={dim ? "#7fa9dc" : "#3f86d8"} aria-hidden="true">
    <rect x="0.5" y="0.5" width="10" height="8" rx="1" />
    <path d="M1 2h9" />
    <rect x="3.5" y="4.500" width="11" height="9" rx="1" />
    <path d="M4 6h10M5 11l1.500 -2l2 3l1.500 -3l1.500 3l1.500 -3" fill="none" />
  </svg>
);

const ChromeButtons = ({ active }: { active: boolean }) => (
  <WindowButtons>
    <WindowButton $kind={active ? "active" : "idle"} aria-label="Minimize">
      <svg width="12" height="12" viewBox="0 0 12 12">
        <rect x="1" y="6.500" width="10" height="4" rx="1" fill="#fff" stroke="#4b5563" />
      </svg>
    </WindowButton>
    <WindowButton $kind={active ? "active" : "idle"} aria-label="Restore">
      <svg width="12" height="12" viewBox="0 0 12 12">
        <rect x="1" y="2" width="10" height="8" rx="1" fill="#fff" stroke="#4b5563" />
        <rect x="4" y="5" width="4" height="2" fill="#9db8d3" stroke="#4b5563" />
      </svg>
    </WindowButton>
    <WindowButton $kind={active ? "close" : "idle"} aria-label="Close">
      <svg width="12" height="12" viewBox="0 0 12 12">
        <path d="M2 2.500L10 10M10 2.500L2 10" stroke="#4b5563" strokeWidth="4" />
        <path d="M2.500 3L9.500 9.500M9.500 3L2.500 9.500" stroke="#fff" strokeWidth="2" />
      </svg>
    </WindowButton>
  </WindowButtons>
);

const Quote = ({ timer }: { timer: string }) => (
  <QuotePanel>
    <Line $size={23} $h={24} $color="#fff" $font={COND} $weight={700}>XAUUSD</Line>
    <Line $size={23} $h={22} $color={SKY} $font={COND} $weight={700}>2639.1</Line>
    <Line $size={15} $h={15} $color="#c0c0c0" $weight={700}>SPD:1.6</Line>
    <Line $size={16} $h={17} $color={LIME} $weight={700} $align="right" $pad={6}>{timer}</Line>
    <Line $size={13} $h={14} $color={SKY} $weight={700}>DAILY OPEN</Line>
    <Line $size={19} $h={18} $color={SKY}>2628.4</Line>
    <Pair $size={16} $h={16} $color={SKY} $weight={700}><span>PFO</span><span>108</span></Pair>
    <Pair $size={16} $h={16} $color="#c0c0c0" $weight={700}><span>HiLo</span><span>162</span></Pair>
    <Pair $size={16} $h={16} $color={VIOLET} $weight={700}><span>Avg</span><span>303</span></Pair>
    <Line $size={20} $h={28} $color={LIME} $font={BLACK} $weight={900} $align="right" $pad={1}>94.07</Line>
    <Frames>
      {["M1", "M5", "15"].map((f) => (
        <FrameButton key={f}>{f}</FrameButton>
      ))}
    </Frames>
    <Line $size={20} $h={22} $color={SKY} $font={BLACK} $weight={900} $align="right" $pad={1}>36%</Line>
  </QuotePanel>
);

const strengths: [string, number][] = [
  ["XAU", 80], ["AUD", 75], ["GBP", 73], ["CAD", 70], ["NZD", 63], ["EUR", 46], ["CHF", 33], ["USD", 33], ["JPY", 29],
];

const StrengthTable = () => (
  <Strength>
    <tbody>
      {strengths.map(([name, pct], i) => (
        <StrengthRow key={name} $tone={i < 2 ? "up" : i > 6 ? "down" : "flat"} $lead={i === 0 || i === 7}>
          <td>{i + 1}</td>
          <td>{name}</td>
          <td>{pct}%</td>
        </StrengthRow>
      ))}
    </tbody>
  </Strength>
);

const Controls = ({ frame }: { frame: string }) => (
  <Overlay>
    <HeaderRow>
      <SymbolLabel>XAUUSD,{frame}</SymbolLabel>
      <Session $width={155} $pad={8} $open><span>HONG KONG</span><span>13:17</span></Session>
      <Session $width={132} $pad={10}><span>LONDON</span><span>06:17</span></Session>
      <Session $width={150} $pad={11}><span>NEW YORK</span><span>01:17</span></Session>
      <PriceState>PRICE: ABOVE THE DAILY OPEN LINE</PriceState>
    </HeaderRow>
    <ShowButton>Show</ShowButton>
    <BigTitle>XAUUSD {frame}</BigTitle>
    <Motto>Carlsberg Don't Do Charts</Motto>
    <Footer>
      <Chip>SEMA2</Chip>
      <SupDemButton>SupDem</SupDemButton>
      <OffButton>OFF</OffButton>
      <FooterRow>
        <ObjectButton>New</ObjectButton>
        <ObjectButton>Del</ObjectButton>
        <SignalBadge>DN SQUARE</SignalBadge>
        <SignalBadge $last>DN ARROW</SignalBadge>
      </FooterRow>
    </Footer>
  </Overlay>
);

const scale1 = ["2642.90", "2641.90", "2640.95", "2639.95", "2638.95", "2638.00", "2637.00", "2636.05", "2635.05", "2634.10", "2633.10", "2632.10", "2631.15", "2630.15", "2629.20", "2628.20", "2627.25", "2626.25", "2625.25", "2624.30"];
const scale5 = ["2646.25", "2644.75", "2643.20", "2641.65", "2640.15", "2638.60", "2637.05", "2635.55", "2634.00", "2632.45", "2630.90", "2629.35", "2627.80", "2626.25", "2624.70", "2623.15", "2621.60", "2620.10", "2618.55", "2617.00"];

const Scale = ({ labels, top, tag }: { labels: string[]; top: number; tag: number }) => (
  <Axis $top={top}>
    {labels.map((l) => (
      <AxisLabel key={l}>{l}</AxisLabel>
    ))}
    <PriceTag $top={tag - 5} $bg="#ff8c00">2639.30</PriceTag>
    <PriceTag $top={tag} $bg="#a9a9a9">2639.13</PriceTag>
  </Axis>
);

export default function App() {
  return (
    <Desktop>
      <GlobalStyle />
      <ChartWindow $grow={1215} $active>
        <TitleBar>
          <ChartIcon />
          <WindowTitle $active>XAUUSD,M1</WindowTitle>
          <ChromeButtons active />
        </TitleBar>
        <Frame>
          <Plot>
            <ChartM1 />
            <Controls frame="M1" />
            <Quote timer="0:9" />
            <StrengthTable />
          </Plot>
          <Scale labels={scale1} top={0} tag={131} />
        </Frame>
      </ChartWindow>
      <ChartWindow $grow={830} $active={false}>
        <TitleBar>
          <ChartIcon dim />
          <WindowTitle $active={false}>XAUUSD,M5</WindowTitle>
          <ChromeButtons active={false} />
        </TitleBar>
        <Frame>
          <Plot>
            <ChartM5 />
            <Controls frame="M5" />
            <Quote timer="2:9" />
            <StrengthTable />
            <GuidesM5 />
          </Plot>
          <Scale labels={scale5} top={10} tag={166} />
        </Frame>
      </ChartWindow>
    </Desktop>
  );
}
